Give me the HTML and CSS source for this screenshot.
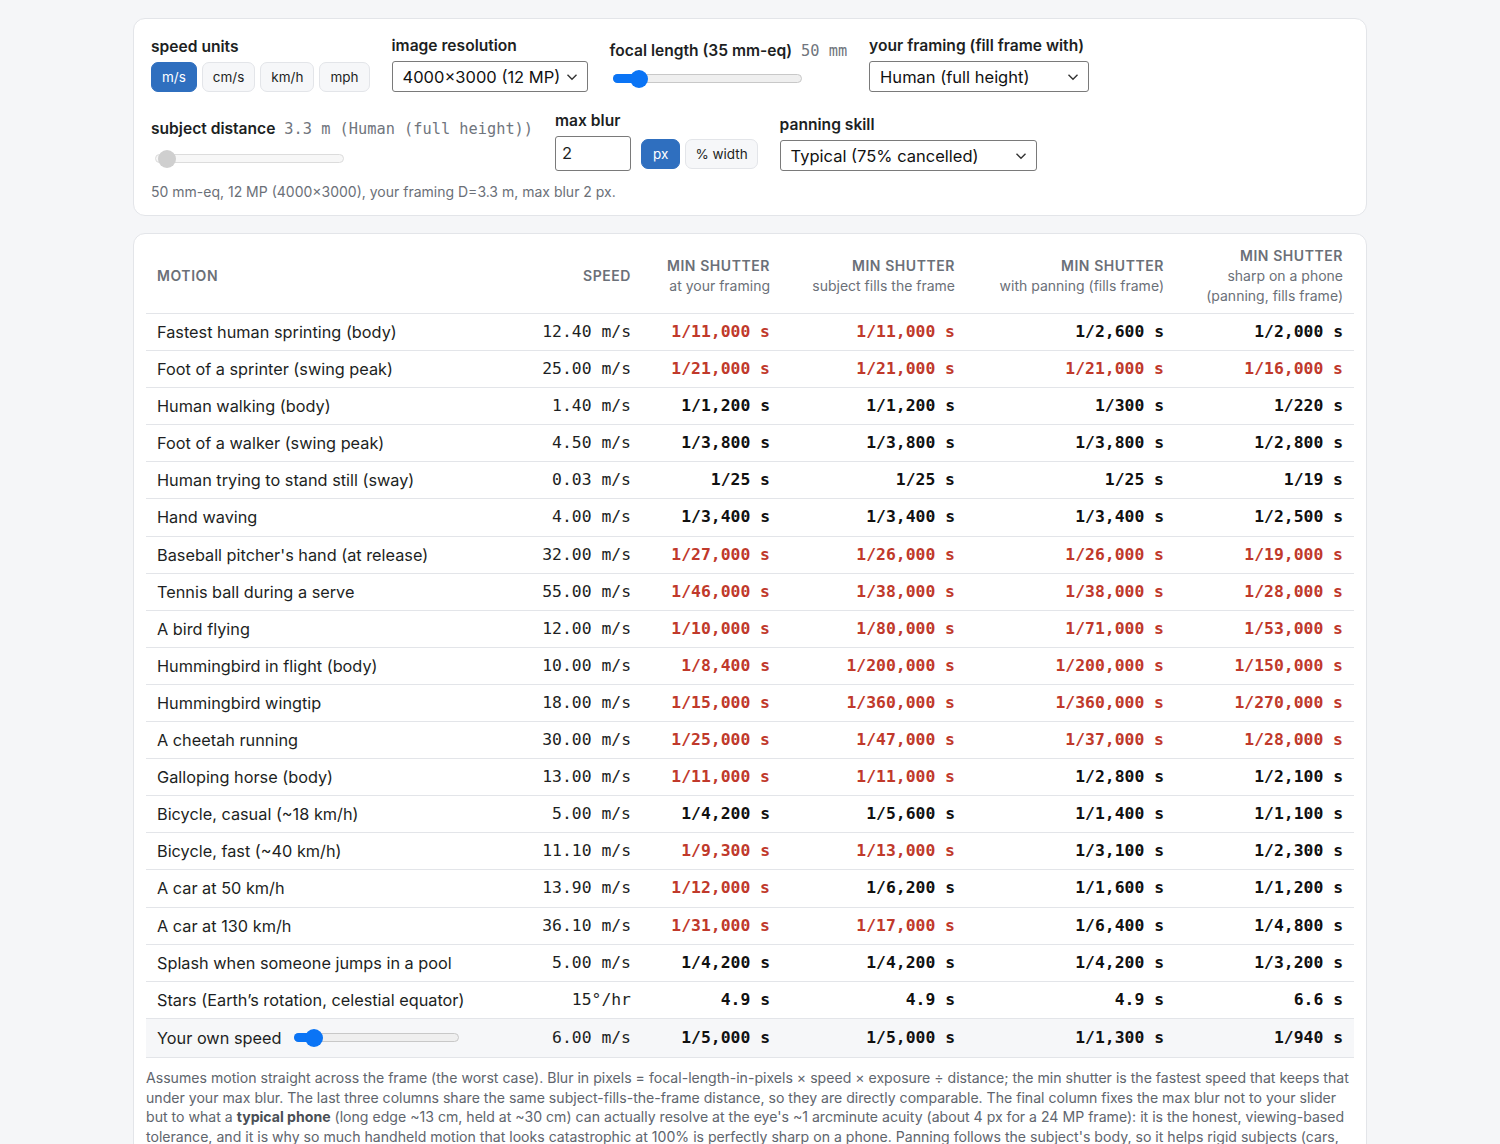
FILE: index.html
```html
<!DOCTYPE html>
<html>

<head>
    <meta charset="utf-8">
    <title>Motion blur: minimum shutter speed</title>
    <link rel="stylesheet" href="styles.css">
</head>

<body>
    <main class="page">
        <section class="card controls">
            <div class="ctl-row">
                <div class="field">
                    <div class="label">speed units</div>
                    <div class="seg">
                        <span class="btn active">m/s</span>
                        <span class="btn">cm/s</span>
                        <span class="btn">km/h</span>
                        <span class="btn">mph</span>
                    </div>
                </div>
                <div class="field">
                    <div class="label">image resolution</div>
                    <div class="select sel-res">
                        <span>4000×3000 (12 MP)</span>
                        <svg width="12" height="8" viewBox="0 0 12 8"><path d="M1.5 1.8 6 6.2 10.5 1.8" fill="none" stroke="#333" stroke-width="1.4"/></svg>
                    </div>
                </div>
                <div class="field">
                    <div class="label">focal length (35 mm-eq) <span class="val">50 mm</span></div>
                    <div class="range range-focal">
                        <div class="fill" style="width: 24px"></div>
                        <div class="thumb" style="left: 16px"></div>
                    </div>
                </div>
                <div class="field">
                    <div class="label">your framing (fill frame with)</div>
                    <div class="select sel-framing">
                        <span>Human (full height)</span>
                        <svg width="12" height="8" viewBox="0 0 12 8"><path d="M1.5 1.8 6 6.2 10.5 1.8" fill="none" stroke="#333" stroke-width="1.4"/></svg>
                    </div>
                </div>
            </div>

            <div class="ctl-row">
                <div class="field">
                    <div class="label">subject distance <span class="val">3.3 m (Human (full height))</span></div>
                    <div class="range range-dist">
                        <div class="thumb gray" style="left: 2px"></div>
                    </div>
                </div>
                <div class="field">
                    <div class="label">max blur</div>
                    <div class="blur-inputs">
                        <div class="num">2</div>
                        <span class="btn active">px</span>
                        <span class="btn btn-pct">% width</span>
                    </div>
                </div>
                <div class="field">
                    <div class="label">panning skill</div>
                    <div class="select sel-pan">
                        <span>Typical (75% cancelled)</span>
                        <svg width="12" height="8" viewBox="0 0 12 8"><path d="M1.5 1.8 6 6.2 10.5 1.8" fill="none" stroke="#333" stroke-width="1.4"/></svg>
                    </div>
                </div>
            </div>

            <p class="summary">50 mm-eq, 12 MP (4000×3000), your framing D=3.3 m, max blur 2 px.</p>
        </section>

        <section class="card table-card">
            <table class="shutter">
                <colgroup>
                    <col style="width: 376px">
                    <col style="width: 120px">
                    <col style="width: 139px">
                    <col style="width: 185px">
                    <col style="width: 209px">
                    <col style="width: 179px">
                </colgroup>
                <thead>
                    <tr>
                        <th class="left">Motion</th>
                        <th>Speed</th>
                        <th>Min shutter<small>at your framing</small></th>
                        <th>Min shutter<small>subject fills the frame</small></th>
                        <th>Min shutter<small>with panning (fills frame)</small></th>
                        <th>Min shutter<small>sharp on a phone</small><small>(panning, fills frame)</small></th>
                    </tr>
                </thead>
                <tbody>
                    <tr><td>Fastest human sprinting (body)</td><td class="spd">12.40 m/s</td><td class="sh bad">1/11,000 s</td><td class="sh bad">1/11,000 s</td><td class="sh">1/2,600 s</td><td class="sh">1/2,000 s</td></tr>
                    <tr><td>Foot of a sprinter (swing peak)</td><td class="spd">25.00 m/s</td><td class="sh bad">1/21,000 s</td><td class="sh bad">1/21,000 s</td><td class="sh bad">1/21,000 s</td><td class="sh bad">1/16,000 s</td></tr>
                    <tr><td>Human walking (body)</td><td class="spd">1.40 m/s</td><td class="sh">1/1,200 s</td><td class="sh">1/1,200 s</td><td class="sh">1/300 s</td><td class="sh">1/220 s</td></tr>
                    <tr><td>Foot of a walker (swing peak)</td><td class="spd">4.50 m/s</td><td class="sh">1/3,800 s</td><td class="sh">1/3,800 s</td><td class="sh">1/3,800 s</td><td class="sh">1/2,800 s</td></tr>
                    <tr><td>Human trying to stand still (sway)</td><td class="spd">0.03 m/s</td><td class="sh">1/25 s</td><td class="sh">1/25 s</td><td class="sh">1/25 s</td><td class="sh">1/19 s</td></tr>
                    <tr><td>Hand waving</td><td class="spd">4.00 m/s</td><td class="sh">1/3,400 s</td><td class="sh">1/3,400 s</td><td class="sh">1/3,400 s</td><td class="sh">1/2,500 s</td></tr>
                    <tr><td>Baseball pitcher's hand (at release)</td><td class="spd">32.00 m/s</td><td class="sh bad">1/27,000 s</td><td class="sh bad">1/26,000 s</td><td class="sh bad">1/26,000 s</td><td class="sh bad">1/19,000 s</td></tr>
                    <tr><td>Tennis ball during a serve</td><td class="spd">55.00 m/s</td><td class="sh bad">1/46,000 s</td><td class="sh bad">1/38,000 s</td><td class="sh bad">1/38,000 s</td><td class="sh bad">1/28,000 s</td></tr>
                    <tr><td>A bird flying</td><td class="spd">12.00 m/s</td><td class="sh bad">1/10,000 s</td><td class="sh bad">1/80,000 s</td><td class="sh bad">1/71,000 s</td><td class="sh bad">1/53,000 s</td></tr>
                    <tr><td>Hummingbird in flight (body)</td><td class="spd">10.00 m/s</td><td class="sh bad">1/8,400 s</td><td class="sh bad">1/200,000 s</td><td class="sh bad">1/200,000 s</td><td class="sh bad">1/150,000 s</td></tr>
                    <tr><td>Hummingbird wingtip</td><td class="spd">18.00 m/s</td><td class="sh bad">1/15,000 s</td><td class="sh bad">1/360,000 s</td><td class="sh bad">1/360,000 s</td><td class="sh bad">1/270,000 s</td></tr>
                    <tr><td>A cheetah running</td><td class="spd">30.00 m/s</td><td class="sh bad">1/25,000 s</td><td class="sh bad">1/47,000 s</td><td class="sh bad">1/37,000 s</td><td class="sh bad">1/28,000 s</td></tr>
                    <tr><td>Galloping horse (body)</td><td class="spd">13.00 m/s</td><td class="sh bad">1/11,000 s</td><td class="sh bad">1/11,000 s</td><td class="sh">1/2,800 s</td><td class="sh">1/2,100 s</td></tr>
                    <tr><td>Bicycle, casual (~18 km/h)</td><td class="spd">5.00 m/s</td><td class="sh">1/4,200 s</td><td class="sh">1/5,600 s</td><td class="sh">1/1,400 s</td><td class="sh">1/1,100 s</td></tr>
                    <tr><td>Bicycle, fast (~40 km/h)</td><td class="spd">11.10 m/s</td><td class="sh bad">1/9,300 s</td><td class="sh bad">1/13,000 s</td><td class="sh">1/3,100 s</td><td class="sh">1/2,300 s</td></tr>
                    <tr><td>A car at 50 km/h</td><td class="spd">13.90 m/s</td><td class="sh bad">1/12,000 s</td><td class="sh">1/6,200 s</td><td class="sh">1/1,600 s</td><td class="sh">1/1,200 s</td></tr>
                    <tr><td>A car at 130 km/h</td><td class="spd">36.10 m/s</td><td class="sh bad">1/31,000 s</td><td class="sh bad">1/17,000 s</td><td class="sh">1/6,400 s</td><td class="sh">1/4,800 s</td></tr>
                    <tr><td>Splash when someone jumps in a pool</td><td class="spd">5.00 m/s</td><td class="sh">1/4,200 s</td><td class="sh">1/4,200 s</td><td class="sh">1/4,200 s</td><td class="sh">1/3,200 s</td></tr>
                    <tr><td>Stars (Earth’s rotation, celestial equator)</td><td class="spd">15°/hr</td><td class="sh">4.9 s</td><td class="sh">4.9 s</td><td class="sh">4.9 s</td><td class="sh">6.6 s</td></tr>
                    <tr class="own">
                        <td>
                            <div class="own-cell">
                                <span>Your own speed</span>
                                <div class="range range-own">
                                    <div class="fill" style="width: 20px"></div>
                                    <div class="thumb" style="left: 10px"></div>
                                </div>
                            </div>
                        </td>
                        <td class="spd">6.00 m/s</td><td class="sh">1/5,000 s</td><td class="sh">1/5,000 s</td><td class="sh">1/1,300 s</td><td class="sh">1/940 s</td>
                    </tr>
                </tbody>
            </table>

            <p class="note">Assumes motion straight across the frame (the worst case). Blur in pixels = focal-length-in-pixels × speed × exposure ÷ distance; the min shutter is the fastest speed that keeps that under your max blur. The last three columns share the same subject-fills-the-frame distance, so they are directly comparable. The final column fixes the max blur not to your slider but to what a <b>typical phone</b> (long edge ~13 cm, held at ~30 cm) can actually resolve at the eye's ~1 arcminute acuity (about 4 px for a 24 MP frame): it is the honest, viewing-based tolerance, and it is why so much handheld motion that looks catastrophic at 100% is perfectly sharp on a phone. Panning follows the subject's body, so it helps rigid subjects (cars, trains, a runner's torso) but does nothing for limbs, wings or spokes that move relative to it.</p>
        </section>
    </main>
</body>

</html>
```

FILE: styles.css
```css
* {
    margin: 0;
    padding: 0;
    box-sizing: border-box;
}

body {
    background-color: #f5f6f8;
    font-family: Inter, "Noto Sans", "Liberation Sans", sans-serif;
    color: #1d1f23;
}

.page {
    width: 1234px;
    margin: 18px auto 0;
}

.card {
    background-color: #fff;
    border: 1px solid #e3e5e9;
    border-radius: 12px;
}

/* controls */

.controls {
    padding: 17px 17px 15px;
}

.ctl-row {
    display: flex;
    align-items: flex-end;
    gap: 22px;
}

.ctl-row + .ctl-row {
    margin-top: 19px;
}

.field {
    display: flex;
    flex-direction: column;
}

.label {
    font-size: 15.6px;
    font-weight: 600;
    line-height: 20px;
    margin-bottom: 5px;
    white-space: nowrap;
}

.label .val {
    font-family: "DejaVu Sans Mono", "Liberation Mono", monospace;
    font-weight: 400;
    font-size: 15.3px;
    color: #70757d;
    margin-left: 5px;
}

.seg,
.blur-inputs {
    display: flex;
    align-items: center;
    gap: 5px;
}

.btn {
    display: inline-flex;
    align-items: center;
    justify-content: center;
    height: 30px;
    padding: 0 11px;
    border: 1px solid #e3e5e9;
    border-radius: 7px;
    background-color: #f6f7f9;
    font-size: 13.5px;
    color: #1d1f23;
}

.btn.active {
    background-color: #2f6fbf;
    border-color: #2f6fbf;
    color: #fff;
}

.seg .btn {
    padding: 0 10px;
}

.blur-inputs .btn-pct {
    padding: 0 9px;
}

.select {
    display: flex;
    align-items: center;
    justify-content: space-between;
    height: 31px;
    padding: 0 9px 0 10px;
    border: 1px solid #7a7a7a;
    border-radius: 3px;
    background-color: #fff;
    font-size: 16.5px;
    color: #111;
}

.sel-res {
    width: 196px;
}

.sel-framing {
    width: 220px;
}

.sel-pan {
    width: 257px;
}

.num {
    width: 76px;
    height: 35px;
    border: 1px solid #7a7a7a;
    border-radius: 3px;
    padding: 6px 6px;
    font-size: 16.5px;
    margin-right: 5px;
}

/* sliders */

.range {
    position: relative;
    height: 9px;
    border: 1px solid #c8c8c8;
    border-radius: 5px;
    background-color: #efefef;
}

.range .fill {
    position: absolute;
    left: -1px;
    top: -1px;
    bottom: -1px;
    background-color: #0a74f5;
    border-radius: 5px 0 0 5px;
}

.range .thumb {
    position: absolute;
    top: -5px;
    width: 18px;
    height: 18px;
    border-radius: 50%;
    background-color: #0a74f5;
}

.range .thumb.gray {
    background-color: #cfcfcf;
}

.range-focal {
    width: 189px;
    margin: 8px 0 9px 3px;
}

.range-dist {
    width: 189px;
    margin: 10px 0 8px 4px;
    border-color: #dcdcdc;
    background-color: #f7f7f7;
}

.range-own {
    width: 165px;
}

.summary {
    margin-top: 12px;
    font-size: 14px;
    color: #6b7078;
}

/* table */

.table-card {
    margin-top: 17px;
    padding: 10px 12px 0;
}

.shutter {
    width: 100%;
    border-collapse: collapse;
    table-layout: fixed;
}

.shutter th {
    padding: 2px 11px 7px;
    text-align: right;
    vertical-align: middle;
    font-size: 14px;
    line-height: 20px;
    font-weight: 600;
    text-transform: uppercase;
    letter-spacing: 0.04em;
    color: #6b7078;
    border-bottom: 1px solid #e3e5e9;
}

.shutter th.left {
    text-align: left;
}

.shutter th small {
    display: block;
    font-size: 14px;
    font-weight: 400;
    text-transform: none;
    letter-spacing: 0;
}

.shutter td {
    padding: 8px 11px;
    line-height: 20.1px;
    font-size: 16.3px;
    border-bottom: 1px solid #e3e5e9;
    white-space: nowrap;
}

.shutter td.spd,
.shutter td.sh {
    text-align: right;
    font-family: "DejaVu Sans Mono", "Liberation Mono", monospace;
    font-size: 16.4px;
}

.shutter td.sh {
    font-weight: 700;
    color: #111;
}

.shutter td.sh.bad {
    color: #c0392b;
}

.shutter tr.own td {
    background-color: #f6f7f9;
    padding-top: 9px;
    padding-bottom: 9px;
}

.own-cell {
    display: flex;
    align-items: center;
    gap: 13px;
}

.note {
    margin-top: 10px;
    font-size: 14.1px;
    line-height: 19.7px;
    color: #60656d;
    padding-bottom: 16px;
}

.note b {
    color: #4a4f56;
}
```
